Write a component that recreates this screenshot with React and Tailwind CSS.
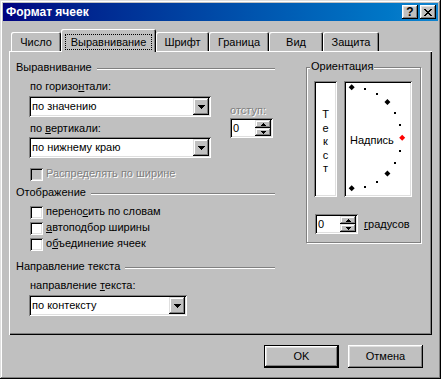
import React from "react";

const sunken =
  "shadow-[inset_1px_1px_0_#808080,inset_-1px_-1px_0_#ffffff,inset_2px_2px_0_#000000,inset_-2px_-2px_0_#dfdfdf]";
const raised =
  "shadow-[inset_-1px_-1px_0_#000000,inset_1px_1px_0_#ffffff,inset_-2px_-2px_0_#808080,inset_2px_2px_0_#dfdfdf]";
const raisedArrow =
  "shadow-[inset_-1px_-1px_0_#000000,inset_1px_1px_0_#dfdfdf,inset_-2px_-2px_0_#808080,inset_2px_2px_0_#ffffff]";

function DownTri() {
  return (
    <svg width="7" height="4" shapeRendering="crispEdges" className="block">
      <rect x="0" y="0" width="7" height="1" fill="#000" />
      <rect x="1" y="1" width="5" height="1" fill="#000" />
      <rect x="2" y="2" width="3" height="1" fill="#000" />
      <rect x="3" y="3" width="1" height="1" fill="#000" />
    </svg>
  );
}

function SmallTri({ up }) {
  return (
    <svg width="5" height="3" shapeRendering="crispEdges" className="block">
      {up ? (
        <>
          <rect x="2" y="0" width="1" height="1" fill="#000" />
          <rect x="1" y="1" width="3" height="1" fill="#000" />
          <rect x="0" y="2" width="5" height="1" fill="#000" />
        </>
      ) : (
        <>
          <rect x="0" y="0" width="5" height="1" fill="#000" />
          <rect x="1" y="1" width="3" height="1" fill="#000" />
          <rect x="2" y="2" width="1" height="1" fill="#000" />
        </>
      )}
    </svg>
  );
}

function Combo({ className, text }) {
  return (
    <div className={`flex h-[21px] bg-white p-[2px] ${sunken} ${className}`}>
      <div className="flex-1 pl-[1px] leading-[17px] whitespace-nowrap">{text}</div>
      <div
        className={`w-[16px] h-[17px] bg-[#c0c0c0] flex items-center justify-center ${raisedArrow}`}
      >
        <DownTri />
      </div>
    </div>
  );
}

function Spin({ className }) {
  return (
    <div className={`flex h-[20px] bg-white p-[2px] ${sunken} ${className}`}>
      <div className="flex-1 pl-[1px] leading-[16px]">0</div>
      <div className="w-[16px] flex flex-col">
        <div
          className={`h-[8px] bg-[#c0c0c0] flex items-center justify-center ${raisedArrow}`}
        >
          <SmallTri up />
        </div>
        <div
          className={`h-[8px] bg-[#c0c0c0] flex items-center justify-center ${raisedArrow}`}
        >
          <SmallTri />
        </div>
      </div>
    </div>
  );
}

function Header({ children, className = "" }) {
  return (
    <div className={`flex leading-[13px] ${className}`}>
      <span className="whitespace-nowrap">{children}</span>
      <div className="flex-1 ml-[5px] mt-[7px] h-[2px] border-t border-t-[#808080] border-b border-b-white" />
    </div>
  );
}

function Check({ children, disabled }) {
  return (
    <div className="flex items-start h-[16px] ml-[14px]">
      <div
        className={`mt-[1px] w-[13px] h-[13px] ${sunken} ${
          disabled ? "bg-[#c0c0c0]" : "bg-white"
        }`}
      />
      <span
        className={`ml-[3px] leading-[13px] whitespace-nowrap ${
          disabled ? "text-[#808080] [text-shadow:1px_1px_0_#ffffff]" : ""
        }`}
      >
        {children}
      </span>
    </div>
  );
}

function Tab({ children, className, selected }) {
  if (selected) {
    return (
      <div
        className={`relative z-10 h-[23px] -mb-[1px] bg-[#c0c0c0] rounded-t-[2px] flex justify-center shadow-[inset_1px_1px_0_#ffffff,inset_-1px_0_0_#000000,inset_-2px_0_0_#808080] ${className}`}
      >
        <span className="mt-[5px] h-[16px] border border-dotted border-black px-[5px] pt-[1px] leading-[13px] whitespace-nowrap">
          {children}
        </span>
      </div>
    );
  }
  return (
    <div
      className={`h-[19px] bg-[#c0c0c0] rounded-t-[2px] flex justify-center pt-[4px] leading-[13px] whitespace-nowrap shadow-[inset_1px_1px_0_#ffffff,inset_-1px_0_0_#000000,inset_-2px_0_0_#808080] ${className}`}
    >
      {children}
    </div>
  );
}

function Dial() {
  const cx = 7.7;
  const cy = 56.8;
  const r = 50.5;
  const big = [90, 45, -45, -90];
  const small = [75, 60, 30, 15, -15, -30, -60, -75];
  const pt = (a) => {
    const rad = (a * Math.PI) / 180;
    return [cx + r * Math.cos(rad), cy - r * Math.sin(rad)];
  };
  const diamond = (x, y, fill, key) => (
    <polygon
      key={key}
      points={`${x},${y - 3} ${x + 3},${y} ${x},${y + 3} ${x - 3},${y}`}
      fill={fill}
    />
  );
  return (
    <svg width="68" height="116" className="block">
      {small.map((a) => {
        const [x, y] = pt(a);
        return (
          <rect
            key={a}
            x={Math.round(x) - 1}
            y={Math.round(y) - 1}
            width="2"
            height="2"
            fill="#000"
          />
        );
      })}
      {big.map((a) => {
        const [x, y] = pt(a);
        return diamond(x, y, "#000", a);
      })}
      {diamond(cx + r, cy, "#ff0000", "red")}
    </svg>
  );
}

export default function App() {
  return (
    <div className="w-[441px] h-[379px] bg-[#c0c0c0] p-[3px] flex flex-col font-['Liberation_Sans',Arial,sans-serif] text-[11px] text-black shadow-[inset_-1px_-1px_0_#000000,inset_1px_1px_0_#dfdfdf,inset_-2px_-2px_0_#808080,inset_2px_2px_0_#ffffff]">
      {/* Title bar */}
      <div className="h-[18px] flex items-center justify-between bg-linear-to-r from-[#000080] to-[#1084d0] pl-[3px] pr-[2px]">
        <span className="text-white font-bold text-[12px] leading-[18px]">
          Формат ячеек
        </span>
        <div className="flex gap-[2px]">
          <div
            className={`w-[16px] h-[14px] bg-[#c0c0c0] flex items-center justify-center font-bold text-[12px] leading-[14px] ${raised}`}
          >
            ?
          </div>
          <div
            className={`w-[16px] h-[14px] bg-[#c0c0c0] flex items-center justify-center ${raised}`}
          >
            <svg width="8" height="7" shapeRendering="crispEdges" className="block">
              <rect x="0" y="0" width="2" height="1" fill="#000" />
              <rect x="6" y="0" width="2" height="1" fill="#000" />
              <rect x="1" y="1" width="2" height="1" fill="#000" />
              <rect x="5" y="1" width="2" height="1" fill="#000" />
              <rect x="2" y="2" width="4" height="1" fill="#000" />
              <rect x="3" y="3" width="2" height="1" fill="#000" />
              <rect x="2" y="4" width="4" height="1" fill="#000" />
              <rect x="1" y="5" width="2" height="1" fill="#000" />
              <rect x="5" y="5" width="2" height="1" fill="#000" />
              <rect x="0" y="6" width="2" height="1" fill="#000" />
              <rect x="6" y="6" width="2" height="1" fill="#000" />
            </svg>
          </div>
        </div>
      </div>

      {/* Tabs */}
      <div className="flex items-end h-[22px] mt-[8px] pl-[8px]">
        <Tab className="w-[50px]">Число</Tab>
        <Tab selected className="w-[95px]">
          Выравнивание
        </Tab>
        <Tab className="w-[53px]">Шрифт</Tab>
        <Tab className="w-[60px]">Граница</Tab>
        <Tab className="w-[54px]">Вид</Tab>
        <Tab className="w-[56px]">Защита</Tab>
      </div>

      {/* Panel */}
      <div className="mx-[6px] h-[284px] flex pt-[10px] pl-[7px] shadow-[inset_1px_1px_0_#ffffff,inset_-1px_-1px_0_#000000,inset_-2px_-2px_0_#808080]">
        {/* Left column */}
        <div className="w-[259px] flex flex-col">
          <Header>Выравнивание</Header>
          <div className="flex mt-[6px] ml-[13px]">
            <div className="w-[182px] flex flex-col">
              <div className="pl-[1px] leading-[13px]">
                по горизо<u>н</u>тали:
              </div>
              <Combo className="mt-[3px] w-[182px]" text="по значению" />
              <div className="pl-[1px] leading-[13px] mt-[5px]">
                по <u>в</u>ертикали:
              </div>
              <Combo className="mt-[2px] w-[182px]" text="по нижнему краю" />
            </div>
            <div className="ml-[19px] mt-[24px] flex flex-col">
              <div className="leading-[13px] text-[#808080] [text-shadow:1px_1px_0_#ffffff]">
                отступ:
              </div>
              <Spin className="mt-[1px] w-[43px]" />
            </div>
          </div>
          <div className="mt-[9px]">
            <Check disabled>Распределять по ширине</Check>
          </div>
          <Header className="mt-[3px]">Отображение</Header>
          <div className="mt-[6px] flex flex-col">
            <Check>
              перено<u>с</u>ить по словам
            </Check>
            <Check>
              <u>а</u>втоподбор ширины
            </Check>
            <Check>
              о<u>б</u>ъединение ячеек
            </Check>
          </div>
          <Header className="mt-[7px]">Направление текста</Header>
          <div className="mt-[6px] ml-[14px] leading-[13px]">
            направление <u>т</u>екста:
          </div>
          <Combo className="mt-[3px] ml-[13px] w-[158px]" text="по контексту" />
        </div>

        {/* Orientation group */}
        <div className="ml-[31px] mt-[6px] w-[115px] h-[176px] relative border border-[#808080] shadow-[inset_1px_1px_0_#ffffff,1px_1px_0_#ffffff] flex flex-col">
          <div className="absolute left-[3px] -top-[8px] px-[1px] bg-[#c0c0c0] leading-[13px]">
            Ориентация
          </div>
          <div className="mt-[13px] ml-[7px] flex gap-[7px]">
            <div
              className={`w-[23px] h-[116px] bg-white flex flex-col items-center pt-[27px] leading-[13.5px] ${sunken}`}
            >
              <span>Т</span>
              <span>е</span>
              <span>к</span>
              <span>с</span>
              <span>т</span>
            </div>
            <div className={`relative w-[68px] h-[116px] bg-white ${sunken}`}>
              <Dial />
              <span className="absolute left-[6px] top-[53px] leading-[13px]">
                Надпись
              </span>
            </div>
          </div>
          <div className="mt-[17px] ml-[8px] flex items-center">
            <Spin className="w-[43px]" />
            <span className="ml-[6px] leading-[13px]">
              <u>г</u>радусов
            </span>
          </div>
        </div>
      </div>

      {/* Buttons */}
      <div className="mt-[10px] flex justify-end gap-[9px] pr-[15px]">
        <div className="w-[75px] h-[23px] border border-black">
          <div
            className={`w-full h-full bg-[#c0c0c0] flex items-center justify-center leading-[13px] ${raised}`}
          >
            OK
          </div>
        </div>
        <div
          className={`w-[75px] h-[23px] bg-[#c0c0c0] flex items-center justify-center leading-[13px] ${raised}`}
        >
          Отмена
        </div>
      </div>
    </div>
  );
}
